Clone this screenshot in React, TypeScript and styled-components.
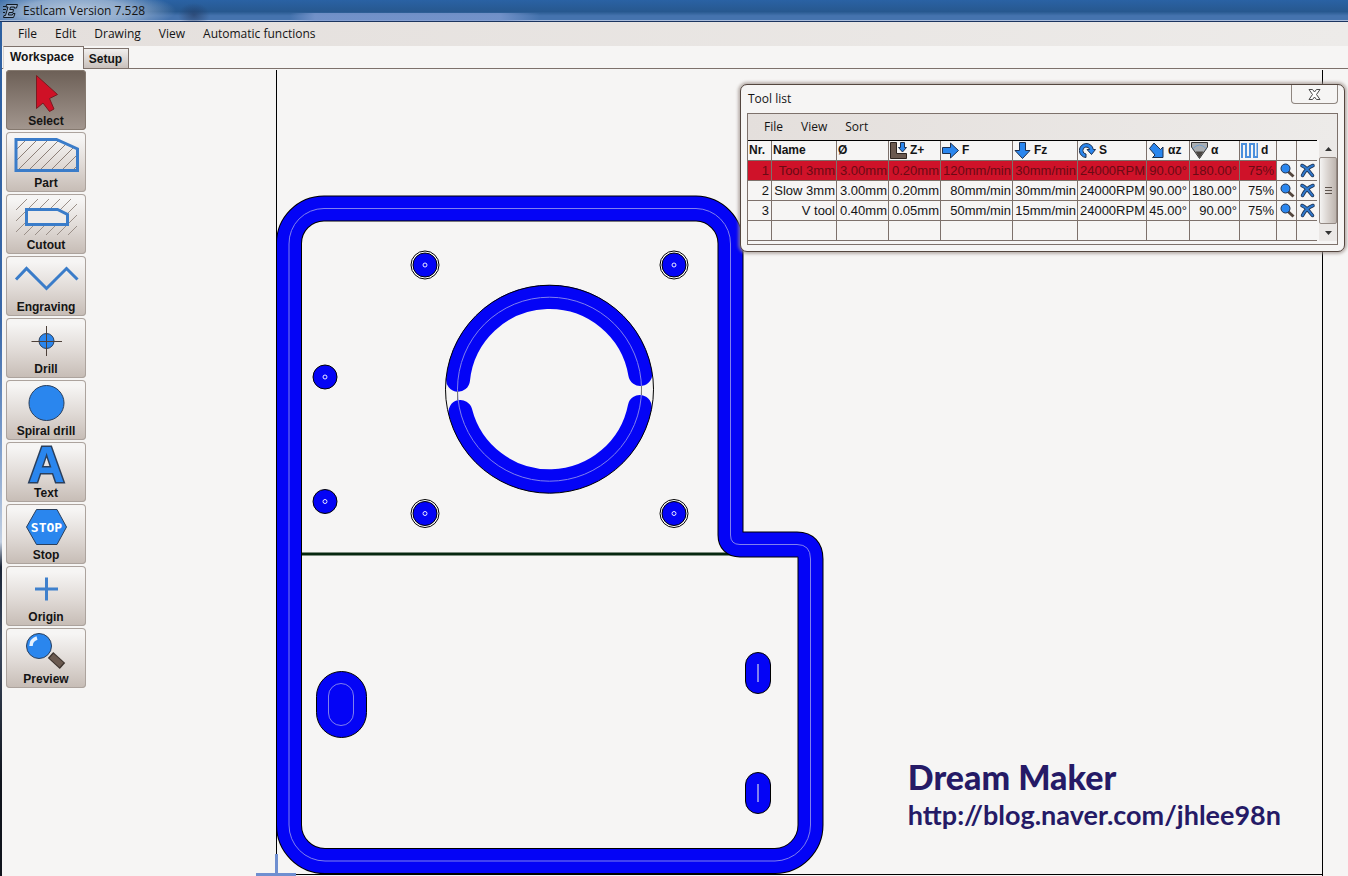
import React from "react";
import styled, { createGlobalStyle, css } from "styled-components";

const UI = `"Open Sans", "Noto Sans", "Noto Sans CJK KR", sans-serif`;
const ARIAL = `"Liberation Sans", Arial, sans-serif`;
const PAPER = "#f6f5f4";
const LINE = "#7d716b";
const BLUE = "#2a86ee";
const EDGE = "#2a3f5c";

const GlobalStyle = createGlobalStyle`
  *, *::before, *::after { box-sizing: border-box; }
  body { margin: 0; background: ${PAPER}; color: #141414; font: 12px/16px ${ARIAL}; }
  button { margin: 0; padding: 0; border: 0; background: none; color: inherit; font: inherit; }
`;

/* ---------- application frame ---------- */

const App_ = styled.div`
  display: flex;
  flex-direction: column;
  min-height: 100vh;
`;

const TitleBar = styled.header`
  display: flex;
  align-items: center;
  gap: 4px;
  height: 22px;
  padding-left: 2px;
  border-bottom: 1px solid #1c3560;
  background:
    radial-gradient(ellipse 100px 22px at 76px 11px, #b4c6dc 0%, #a3bad6cc 55%, #7d9dc800 100%),
    radial-gradient(ellipse 16px 12px at 194px 15px, #22365c99 0%, #22365c00 100%),
    linear-gradient(90deg, #7d99cf00 290px, #7d99cfcc 315px, #7d99cfcc 500px, #7d99cf00 540px) 0 13px / 100% 8px no-repeat,
    linear-gradient(#2a62a4 0%, #27588f 55%, #4573ae 75%, #4573ae 94%, #a9bcdb 95%);
`;

const Title = styled.h1`
  margin: 0;
  font: 12px/16px ${UI};
`;

const Frame = styled.div`
  display: flex;
  flex: 1;
  flex-direction: column;
  padding-left: 2px;
  background: linear-gradient(#2c5fa0 0, #3a68a8 300px, #7c9dcb 420px, #c3d0e2 520px, #1b2536 545px, #3c4a60 620px, #10141c 760px);
`;

const Content = styled.div`
  display: flex;
  flex: 1;
  flex-direction: column;
  background: ${PAPER};
`;

const MenuBar = styled.nav<{ $tall?: boolean }>`
  display: flex;
  align-items: center;
  height: ${(p) => (p.$tall ? 26 : 24)}px;
  padding-left: 6px;
  background: linear-gradient(90deg, #e4dfdc, #edebe9);
`;

const MenuItem = styled.button`
  padding: 0 8px 0 10px;
  font: 12px/16px ${UI};
`;

const Tabs = styled.div`
  display: flex;
  align-items: flex-end;
  height: 23px;
  padding-left: 1px;
  border-bottom: 1px solid ${LINE};
`;

const Tab = styled.button<{ $active?: boolean }>`
  font: bold 12px/20px ${ARIAL};
  border: 1px solid ${LINE};
  border-bottom: 0;
  ${(p) =>
    p.$active
      ? css`
          height: 23px;
          margin-bottom: -1px;
          padding: 0 9px 2px 6px;
          border-left-color: #d8d4d1;
          background: ${PAPER};
        `
      : css`
          height: 20px;
          padding: 0 6px 0 5px;
          border-left: 0;
          background: linear-gradient(#f1efee, #c9c1bc);
        `}
`;

const Body = styled.main`
  display: flex;
  flex: 1;
`;

/* ---------- tool rail ---------- */

const Rail = styled.aside`
  display: flex;
  flex: none;
  flex-direction: column;
  gap: 2px;
  padding: 1px 2px 0 4px;
`;

const RailButton = styled.button<{ $active?: boolean }>`
  display: flex;
  flex-direction: column;
  align-items: center;
  width: 80px;
  height: 60px;
  border-radius: 4px;
  box-shadow: inset 0 0 0 1px ${(p) => (p.$active ? "#85796f" : "#aca39d")};
  background: ${(p) =>
    p.$active ? "linear-gradient(#6c5f56, #a3978f)" : "linear-gradient(#f6f5f4 10%, #e0dad6 55%, #c6bcb5)"};
  font: bold 12px/16px ${ARIAL};
`;

const RailIcon = styled.svg`
  display: block;
  flex: none;
  overflow: visible;
`;

const Label = styled.span`
  display: block;
`;

const hatch = (x0: number, x1: number, y0: number, y1: number, step: number) => {
  const parts: string[] = [];
  for (let c = x0 + y0 + step; c < x1 + y1; c += step) {
    const ax = Math.max(x0, c - y1);
    const bx = Math.min(x1, c - y0);
    parts.push(`M${ax} ${c - ax}L${bx} ${c - bx}`);
  }
  return parts.join("");
};

const TOOLS: { name: string; icon: React.ReactNode }[] = [
  {
    name: "Select",
    icon: <path d="M30.5 5.5V38.5L37 33L43.5 41.5L48 39L43.5 28.5L51.5 24.5Z" fill="#cf1126" stroke="#7a1a20" />,
  },
  {
    name: "Part",
    icon: (
      <>
        <clipPath id="part"><path d="M10 7H50L71 17V39H10Z" /></clipPath>
        <path d={hatch(10, 71, 7, 39, 11)} stroke="#8d8078" clipPath="url(#part)" />
        <path d="M10 7.5H50.5L71.5 17V38.5H10Z" fill="none" stroke="#3a7cc9" strokeWidth="3" />
      </>
    ),
  },
  {
    name: "Cutout",
    icon: (
      <>
        <path d={hatch(10, 71, 5, 41, 11)} stroke="#9a8f88" />
        <path d="M20.5 15.5H51.5L61.5 20.5V30.5H20.5Z" fill="#eeebe9" stroke="#3a7cc9" strokeWidth="3" />
      </>
    ),
  },
  {
    name: "Engraving",
    icon: <path d="M10 23.5L20.5 12.5L40.5 32.5L60.5 12.5L71.5 23.5" fill="none" stroke="#3a7cc9" strokeWidth="3" />,
  },
  {
    name: "Drill",
    icon: (
      <>
        <circle cx="40.5" cy="23" r="7.5" fill={BLUE} stroke={EDGE} />
        <path d="M25.5 23.5H56M40.5 8V38" stroke="#4d4039" />
      </>
    ),
  },
  { name: "Spiral drill", icon: <circle cx="40.5" cy="23" r="17.5" fill={BLUE} stroke={EDGE} /> },
  {
    name: "Text",
    icon: (
      <>
        <text x="40.5" y="40" textAnchor="middle" fontFamily="Liberation Sans, Arial, sans-serif" fontWeight="bold" fontSize="50" fill={BLUE} stroke={EDGE} strokeWidth="3" paintOrder="stroke">
          A
        </text>
      </>
    ),
  },
  {
    name: "Stop",
    icon: (
      <>
        <path d="M30.500 5.500H51L60.500 23L51 40.500H30.500L20.500 23Z" fill={BLUE} stroke={EDGE} />
        <text x="40.5" y="28" textAnchor="middle" fontFamily="DejaVu Sans Mono, monospace" fontWeight="bold" fontSize="13" fill="#fff">
          STOP
        </text>
      </>
    ),
  },
  { name: "Origin", icon: <path d="M29 23H52M40.500 11.500V34.500" stroke="#3f80cc" strokeWidth="3" /> },
  {
    name: "Preview",
    icon: (
      <>
        <path d="M44.500 27L56.500 38" stroke="#3d332d" strokeWidth="8" />
        <path d="M45.500 28L55.500 37" stroke="#6b5a50" strokeWidth="6" />
        <circle cx="33" cy="18" r="12.500" fill={BLUE} stroke={EDGE} />
        <path d="M25 18A8.500 8.500 0 0 1 31 10" fill="none" stroke="#e4f1ff" strokeWidth="3.500" />
      </>
    ),
  },
];

/* ---------- drawing ---------- */

const Stage = styled.section`
  position: relative;
  flex: 1;
  min-width: 0;
`;

const Drawing = styled.svg`
  display: block;
  width: 100%;
  height: auto;
`;

const CONTOUR =
  "M324 208.500H696A35 35 0 0 1 730.500 244V535Q730.500 544.500 740 544.500H797Q810.500 544.500 810.500 559V825A36 36 0 0 1 775 861H325A36 36 0 0 1 289 825V244A35 35 0 0 1 324 208.500Z";
const UPPER_ARC = "M458 379.700A92 92 0 0 1 640.300 374";
const LOWER_ARC = "M460.400 412A92 92 0 0 0 639.800 407";
const BOLTS = [[425, 265], [674, 265], [425, 513.5], [674, 513.5]];
const PINS = [[325, 377], [325, 501.5]];
const SLOTS = [652, 772];
const CUT = "#0404f6";
const TRACE = "#8080ee";

const Workpiece = () => (
  <Drawing viewBox="88 69 1260 807" role="img" aria-label="Workpiece drawing">
    <g fill="none" stroke="#000">
      <path d="M276.500 70V876M1322.500 70V876M276 874.500H1323" />
      <path d="M301 554H735" stroke="#06280f" strokeWidth="3" />
      <path d={CONTOUR} strokeWidth="26" />
      <path d={CONTOUR} stroke={CUT} strokeWidth="24" />
      <path d={CONTOUR} stroke={TRACE} />
      <g strokeLinecap="round">
        <path d={UPPER_ARC} strokeWidth="24" stroke={CUT} />
        <path d={LOWER_ARC} strokeWidth="24" stroke={CUT} />
      </g>
      <circle cx="549.500" cy="389.200" r="104" />
      <circle cx="549.500" cy="389.200" r="92" stroke={TRACE} />
      <path d="M457.500 391V400M641.500 386V395" stroke="#777" />
    </g>
    {BOLTS.map(([x, y]) => (
      <g key={`${x}-${y}`}>
        <circle cx={x} cy={y} r="14" fill="#fff" stroke="#000" />
        <circle cx={x} cy={y} r="12" fill={CUT} stroke="#000" />
        <circle cx={x} cy={y} r="2" fill="none" stroke="#e8e8ff" />
      </g>
    ))}
    {PINS.map(([x, y]) => (
      <g key={y}>
        <circle cx={x} cy={y} r="12" fill={CUT} stroke="#000" />
        <circle cx={x} cy={y} r="2" fill="none" stroke="#e8e8ff" />
      </g>
    ))}
    <rect x="316.500" y="671.500" width="50" height="66" rx="25" fill={CUT} stroke="#000" />
    <rect x="328.500" y="683.500" width="25" height="42" rx="12.500" fill="none" stroke={TRACE} />
    {SLOTS.map((y) => (
      <g key={y}>
        <rect x="745.500" y={y + 0.5} width="25" height="41" rx="12.500" fill={CUT} stroke="#000" />
        <path d={`M758 ${y + 12}V${y + 30}`} stroke={TRACE} strokeWidth="2" />
      </g>
    ))}
    <path d="M256 874.500H296M276.500 854V876" stroke="#6f8fd0" strokeWidth="3" />
  </Drawing>
);

const Signature = styled.address`
  position: absolute;
  right: 67px;
  bottom: 42px;
  color: #251a66;
  font: bold 27px/38px Lato, Carlito, sans-serif;
`;

const SignatureName = styled.strong`
  display: block;
  font-size: 34px;
`;

const SignatureLink = styled.a`
  color: inherit;
  text-decoration: none;
`;

/* ---------- tool list window ---------- */

const Dialog = styled.section`
  position: absolute;
  top: 15px;
  right: 3px;
  width: 605px;
  padding: 0 6px 6px;
  border: 1px solid #54463f;
  border-radius: 7px;
  background: ${PAPER};
  box-shadow: 0 0 3px 2px #9d928caa;
`;

const DialogHead = styled.header`
  display: flex;
  align-items: flex-start;
  justify-content: space-between;
  height: 28px;
`;

const DialogTitle = styled.h2`
  margin: 0;
  padding: 5px 0 0 1px;
  font: 12px/18px ${UI};
`;

const CloseButton = styled.button`
  display: flex;
  align-items: center;
  justify-content: center;
  width: 47px;
  height: 19px;
  border: 1px solid #8f8680;
  border-top: 0;
  border-radius: 0 0 4px 4px;
`;

const Panel = styled.div`
  border: 1px solid ${LINE};
  padding-bottom: 3px;
`;

const TableArea = styled.div`
  display: flex;
  justify-content: space-between;
`;

const Table = styled.table`
  flex: none;
  width: 569px;
  table-layout: fixed;
  border-spacing: 0;
  border-top: 1px solid #000;
  font: 13px/19px ${ARIAL};
`;

const Th = styled.th`
  height: 20px;
  padding: 0 1px;
  border-right: 1px solid ${LINE};
  border-bottom: 1px solid ${LINE};
  font-size: 12px;
  font-weight: bold;
  text-align: left;
  white-space: nowrap;
  &:last-child { border-right: 0; }
`;

const HeadCell = styled.span`
  display: flex;
  align-items: center;
  gap: 3px;
  height: 19px;
`;

const Td = styled.td`
  height: 20px;
  padding: 0 1px;
  border-right: 1px solid ${LINE};
  border-bottom: 1px solid ${LINE};
  text-align: right;
  white-space: nowrap;
  &:last-child { border-right: 0; }
`;

const NumTd = styled(Td)`
  padding-right: 2px;
`;

const Row = styled.tr<{ $selected?: boolean }>`
  ${(p) =>
    p.$selected &&
    css`
      color: #6a0a14;
      td:nth-child(-n + 10) { background: #cf1229; }
    `}
`;

const RowButton = styled.button`
  display: flex;
  align-items: center;
  justify-content: center;
  width: 18px;
  height: 19px;
`;

const Scrollbar = styled.div`
  display: flex;
  flex: none;
  flex-direction: column;
  width: 18px;
  background: #ebe8e6;
`;

const ScrollArrow = styled.button`
  display: flex;
  align-items: center;
  justify-content: center;
  height: 17px;
`;

const Thumb = styled.div`
  display: flex;
  flex: 1;
  align-items: center;
  justify-content: center;
  border: 1px solid #948a84;
  border-radius: 2px;
  background: linear-gradient(90deg, #f4f3f2, #d9d3cf 50%, #bdb4ae);
`;

const Glyph = ({ children }: { children: React.ReactNode }) => (
  <svg width="17" height="17" viewBox="0 0 17 17" aria-hidden="true">
    {children}
  </svg>
);

const DARK = "#1d2f4d";
const COLUMNS: { width: number; label: string; icon?: React.ReactNode }[] = [
  { width: 24, label: "Nr." },
  { width: 65, label: "Name" },
  { width: 52, label: "Ø" },
  {
    width: 52,
    label: "Z+",
    icon: (
      <>
        <path d="M.5 .5H6.500V11.500H16.500V16.500H.5Z" fill="#6b5a50" stroke="#2d241f" />
        <path d="M10.500 .5H14.500V5.500H16.500L12.500 10L8.500 5.500H10.500Z" fill={BLUE} stroke={DARK} />
      </>
    ),
  },
  { width: 72, label: "F", icon: <path d="M.5 5.500H8.500V1L16.500 8.500L8.500 16V11.500H.5Z" fill={BLUE} stroke={DARK} /> },
  { width: 65, label: "Fz", icon: <path d="M5.500 .5H11.500V8.500H16L8.500 16.500L1 8.500H5.500Z" fill={BLUE} stroke={DARK} /> },
  {
    width: 69,
    label: "S",
    icon: (
      <path d="M7 15.500A7 7 0 1 1 14.300 7.500H16.500L12.500 12.500L8 7.500H10.700A3.500 3.500 0 1 0 7 12Z" fill={BLUE} stroke={DARK} />
    ),
  },
  { width: 43, label: "αz", icon: <path d="M6 1L12.500 7.500L15 5V15.500H4.500L7 13L1.500 6.500Z" fill={BLUE} stroke={DARK} /> },
  {
    width: 50,
    label: "α",
    icon: (
      <>
        <path d="M.5 .5H16.500V5L8.500 16.500L.5 5Z" fill="#a9adb1" stroke="#333" />
        <path d="M4.500 9.500H12.500L8.500 16Z" fill="#4b4642" />
        <path d="M1.500 7Q8.500 -1 15.500 7" fill="none" stroke="#6f9fd0" />
      </>
    ),
  },
  {
    width: 37,
    label: "d",
    icon: <path d="M1 16V2H5V15H9V2H13V15H16.500V1" fill="none" stroke="#4a8fdc" strokeWidth="2" />,
  },
  { width: 20, label: "" },
  { width: 20, label: "" },
];

const ROWS = [
  ["1", "Tool 3mm", "3.00mm", "0.20mm", "120mm/min", "30mm/min", "24000RPM", "90.00°", "180.00°", "75%"],
  ["2", "Slow 3mm", "3.00mm", "0.20mm", "80mm/min", "30mm/min", "24000RPM", "90.00°", "180.00°", "75%"],
  ["3", "V tool", "0.40mm", "0.05mm", "50mm/min", "15mm/min", "24000RPM", "45.00°", "90.00°", "75%"],
];

const CROSS = "M3 3.500Q7 5 13.500 13.500M14 3.500Q7 6 3.500 13.500";

const ToolList = () => (
  <Dialog aria-label="Tool list">
    <DialogHead>
      <DialogTitle>Tool list</DialogTitle>
      <CloseButton aria-label="Close">
        <svg width="13" height="11" viewBox="0 0 13 11" aria-hidden="true">
          <path d="M1 .5H4.500L6.500 3L8.500 .5H12L8.500 5.500L12 10.500H8.500L6.500 8L4.500 10.500H1L4.500 5.500Z" fill="#fff" stroke="#4a4a4a" />
        </svg>
      </CloseButton>
    </DialogHead>
    <Panel>
      <MenuBar $tall>
        {["File", "View", "Sort"].map((m) => (
          <MenuItem key={m}>{m}</MenuItem>
        ))}
      </MenuBar>
      <TableArea>
        <Table>
          <colgroup>
            {COLUMNS.map((c, i) => (
              <col key={i} width={c.width} />
            ))}
          </colgroup>
          <thead>
            <tr>
              {COLUMNS.map((c, i) => (
                <Th key={i} scope="col">
                  <HeadCell>
                    {c.icon && <Glyph>{c.icon}</Glyph>}
                    {c.label}
                  </HeadCell>
                </Th>
              ))}
            </tr>
          </thead>
          <tbody>
            {ROWS.map((row, r) => (
              <Row key={r} $selected={r === 0}>
                {row.map((v, i) => (i === 0 || i > 6 ? <NumTd key={i}>{v}</NumTd> : <Td key={i}>{v}</Td>))}
                <Td>
                  <RowButton aria-label={`Find tool ${row[0]}`}>
                    <Glyph>
                      <path d="M9 9.500L14.500 14.500" stroke="#54463e" strokeWidth="3" />
                      <circle cx="6.500" cy="6.500" r="4.500" fill={BLUE} stroke={DARK} />
                    </Glyph>
                  </RowButton>
                </Td>
                <Td>
                  <RowButton aria-label={`Delete tool ${row[0]}`}>
                    <Glyph>
                      <path d={CROSS} fill="none" stroke={DARK} strokeWidth="3.500" strokeLinecap="round" />
                      <path d={CROSS} fill="none" stroke="#2f78cc" strokeWidth="2" strokeLinecap="round" />
                    </Glyph>
                  </RowButton>
                </Td>
              </Row>
            ))}
            <Row>
              {COLUMNS.map((_, i) => (
                <Td key={i} />
              ))}
            </Row>
          </tbody>
        </Table>
        <Scrollbar>
          <ScrollArrow aria-label="Scroll up">
            <svg width="7" height="4" viewBox="0 0 7 4" aria-hidden="true"><path d="M0 4L3.500 0L7 4Z" fill="#333" /></svg>
          </ScrollArrow>
          <Thumb>
            <svg width="7" height="9" viewBox="0 0 7 9" aria-hidden="true">
              <path d="M0 1.500H7M0 4.500H7M0 7.500H7" stroke="#5e544e" />
            </svg>
          </Thumb>
          <ScrollArrow aria-label="Scroll down">
            <svg width="7" height="4" viewBox="0 0 7 4" aria-hidden="true"><path d="M0 0L3.500 4L7 0Z" fill="#333" /></svg>
          </ScrollArrow>
        </Scrollbar>
      </TableArea>
    </Panel>
  </Dialog>
);

export default function App() {
  return (
    <App_>
      <GlobalStyle />
      <TitleBar>
        <svg width="17" height="16" viewBox="0 0 17 16" aria-hidden="true">
          <path d="M4.500 1.500H15.500L14.500 5H12L12.500 4H8.500L7.800 6.500H11.500L10.800 9.500H7L6.300 12H10.500L11 10.500H13L11.500 14.500H1.500L2 12.500H3.500L6 4H4Z" fill="#93abc9" stroke="#101820" />
          <path d="M1 3.500H4M1 6.500H4M1 9.500H3" stroke="#101820" />
        </svg>
        <Title>Estlcam Version 7.528</Title>
      </TitleBar>
      <Frame>
        <Content>
          <MenuBar>
            {["File", "Edit", "Drawing", "View", "Automatic functions"].map((m) => (
              <MenuItem key={m}>{m}</MenuItem>
            ))}
          </MenuBar>
          <Tabs role="tablist">
            <Tab role="tab" aria-selected="true" $active>Workspace</Tab>
            <Tab role="tab" aria-selected="false">Setup</Tab>
          </Tabs>
          <Body>
            <Rail>
              {TOOLS.map((t, i) => (
                <RailButton key={t.name} $active={i === 0}>
                  <RailIcon width="80" height="43" viewBox="0 0 80 43" aria-hidden="true">{t.icon}</RailIcon>
                  <Label>{t.name}</Label>
                </RailButton>
              ))}
            </Rail>
            <Stage>
              <Workpiece />
              <Signature>
                <SignatureName>Dream Maker</SignatureName>
                <SignatureLink href="http://blog.naver.com/jhlee98n">http://blog.naver.com/jhlee98n</SignatureLink>
              </Signature>
              <ToolList />
            </Stage>
          </Body>
        </Content>
      </Frame>
    </App_>
  );
}
